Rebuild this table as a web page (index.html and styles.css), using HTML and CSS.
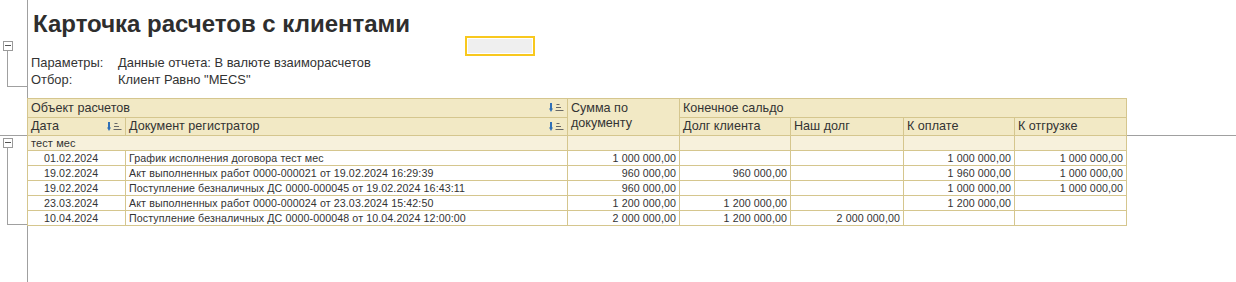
FILE: index.html
```html
<!DOCTYPE html>
<html lang="ru">
<head>
<meta charset="utf-8">
<title>Карточка расчетов с клиентами</title>
<link rel="stylesheet" href="styles.css">
</head>
<body>
<div class="page">
  <div class="gutter">
    <div class="node n1"><span class="box"></span><span class="stem s1"></span></div>
    <div class="rule"></div>
    <div class="node n2"><span class="box"></span><span class="stem s2"></span></div>
  </div>
  <div class="content">
    <h1 class="title">Карточка расчетов с клиентами</h1>
    <div class="cursor"></div>
    <div class="params">
      <div class="prow"><span class="plabel">Параметры:</span><span>Данные отчета: В валюте взаиморасчетов</span></div>
      <div class="prow"><span class="plabel">Отбор:</span><span>Клиент Равно "MECS"</span></div>
    </div>
    <div class="tablerow">
      <table class="report">
        <colgroup>
          <col class="c-date"><col class="c-doc"><col class="c-sum"><col class="c-n1"><col class="c-n2"><col class="c-n3"><col class="c-n4">
        </colgroup>
        <thead>
          <tr class="h1">
            <th colspan="2"><div class="hc"><span>Объект расчетов</span><svg class="sort" width="16" height="10" viewBox="0 0 16 10"><rect x="1" y="0" width="2" height="6" fill="#2f6fb6"/><path d="M0 5.5h4L2 9z" fill="#2f6fb6"/><rect x="7.5" y="1" width="3" height="1" fill="#666"/><rect x="7" y="4" width="5" height="1" fill="#666"/><rect x="6.5" y="7" width="8" height="1" fill="#666"/></svg></div></th>
            <th rowspan="2" class="top">Сумма по<br>документу</th>
            <th colspan="4">Конечное сальдо</th>
          </tr>
          <tr class="h2">
            <th><div class="hc"><span>Дата</span><svg class="sort" width="16" height="10" viewBox="0 0 16 10"><rect x="1" y="0" width="2" height="6" fill="#2f6fb6"/><path d="M0 5.5h4L2 9z" fill="#2f6fb6"/><rect x="7.5" y="1" width="3" height="1" fill="#666"/><rect x="7" y="4" width="5" height="1" fill="#666"/><rect x="6.5" y="7" width="8" height="1" fill="#666"/></svg></div></th>
            <th><div class="hc"><span>Документ регистратор</span><svg class="sort" width="16" height="10" viewBox="0 0 16 10"><rect x="1" y="0" width="2" height="6" fill="#2f6fb6"/><path d="M0 5.5h4L2 9z" fill="#2f6fb6"/><rect x="7.5" y="1" width="3" height="1" fill="#666"/><rect x="7" y="4" width="5" height="1" fill="#666"/><rect x="6.5" y="7" width="8" height="1" fill="#666"/></svg></div></th>
            <th>Долг клиента</th>
            <th>Наш долг</th>
            <th>К оплате</th>
            <th>К отгрузке</th>
          </tr>
        </thead>
        <tbody>
          <tr class="grp"><td colspan="2">тест мес</td><td></td><td></td><td></td><td></td><td></td></tr>
          <tr><td class="date">01.02.2024</td><td>График исполнения договора тест мес</td><td class="num">1 000 000,00</td><td></td><td></td><td class="num">1 000 000,00</td><td class="num">1 000 000,00</td></tr>
          <tr><td class="date">19.02.2024</td><td>Акт выполненных работ 0000-000021 от 19.02.2024 16:29:39</td><td class="num">960 000,00</td><td class="num">960 000,00</td><td></td><td class="num">1 960 000,00</td><td class="num">1 000 000,00</td></tr>
          <tr><td class="date">19.02.2024</td><td>Поступление безналичных ДС 0000-000045 от 19.02.2024 16:43:11</td><td class="num">960 000,00</td><td></td><td></td><td class="num">1 000 000,00</td><td class="num">1 000 000,00</td></tr>
          <tr><td class="date">23.03.2024</td><td>Акт выполненных работ 0000-000024 от 23.03.2024 15:42:50</td><td class="num">1 200 000,00</td><td class="num">1 200 000,00</td><td></td><td class="num">1 200 000,00</td><td></td></tr>
          <tr><td class="date">10.04.2024</td><td>Поступление безналичных ДС 0000-000048 от 10.04.2024 12:00:00</td><td class="num">2 000 000,00</td><td class="num">1 200 000,00</td><td class="num">2 000 000,00</td><td></td><td></td></tr>
        </tbody>
      </table>
      <div class="tail"></div>
    </div>
  </div>
</div>
</body>
</html>
```

FILE: styles.css
```css
html, body {
  margin: 0;
  padding: 0;
  background: #fff;
}
body {
  font-family: "Liberation Sans", Arial, sans-serif;
  color: #333;
}
.page {
  display: flex;
  width: 1236px;
  height: 282px;
  overflow: hidden;
}
.gutter {
  width: 27px;
  flex: none;
  display: flex;
  flex-direction: column;
}
.node {
  display: flex;
  flex-direction: column;
}
.n1 { margin-top: 41px; }
.n2 { margin-top: 2px; }
.box {
  position: relative;
  display: block;
  box-sizing: border-box;
  width: 10px;
  height: 10px;
  margin-left: 3px;
  border: 1px solid #9a9a9a;
  background: #fff;
}
.box::after {
  content: "";
  position: absolute;
  left: 1px;
  right: 1px;
  top: 3px;
  height: 1px;
  background: #555;
}
.stem {
  display: block;
  box-sizing: border-box;
  margin-left: 7px;
  width: 20px;
  border-left: 1px solid #a0a0a0;
  border-bottom: 1px solid #a0a0a0;
}
.s1 { height: 36px; }
.s2 { height: 77px; }
.rule {
  margin-top: 48px;
  height: 1px;
  background: #a0a0a0;
}
.content {
  flex: 1;
  position: relative;
  border-left: 1px solid #a0a0a0;
}
.title {
  margin: 10px 0 0 5px;
  font-size: 24px;
  line-height: 28px;
  font-weight: bold;
  color: #2e2e2e;
}
.cursor {
  position: absolute;
  left: 437px;
  top: 36px;
  width: 70px;
  height: 20px;
  box-sizing: border-box;
  border: 2px solid #f8c81e;
  background: #efefef;
  box-shadow: inset 0 0 0 1px #fff;
}
.params {
  margin: 16px 0 0 3px;
  font-size: 12.9px;
  line-height: 17px;
}
.prow {
  display: flex;
}
.plabel {
  width: 87px;
  flex: none;
}
.tablerow {
  display: flex;
  align-items: flex-start;
  margin-top: 10px;
  margin-left: -1px;
}
.tail {
  flex: 1;
  box-sizing: border-box;
  height: 38px;
  border-bottom: 1px solid #a0a0a0;
}
.report {
  border-collapse: collapse;
  table-layout: fixed;
  width: 1100px;
  flex: none;
}
.c-date { width: 98px; }
.c-doc { width: 442px; }
.c-sum { width: 112px; }
.c-n1 { width: 111px; }
.c-n2 { width: 113px; }
.c-n3 { width: 111px; }
.c-n4 { width: 112px; }
.report th,
.report td {
  border: 1px solid #d5c68e;
  padding: 0 3px;
  white-space: nowrap;
  overflow: hidden;
}
.report th {
  background: #f2e9c5;
  font-weight: normal;
  font-size: 12.6px;
  line-height: 15px;
  text-align: left;
  vertical-align: middle;
  color: #333;
}
.report th.top {
  vertical-align: top;
  padding-top: 2px;
}
.h1 { height: 19px; }
.h2 { height: 18px; }
.hc {
  display: flex;
  align-items: center;
  justify-content: space-between;
}
.sort {
  flex: none;
  margin-right: -1px;
}
.report td {
  font-size: 10.67px;
  letter-spacing: 0.1px;
  line-height: 13px;
  height: 14px;
  padding-top: 0;
  padding-bottom: 0;
  color: #333;
  background: #fff;
}
.report tr.grp td {
  background: #f7f1dc;
  font-size: 11px;
}
.report td.date {
  padding-left: 16px;
}
.report td.num {
  text-align: right;
}
```
